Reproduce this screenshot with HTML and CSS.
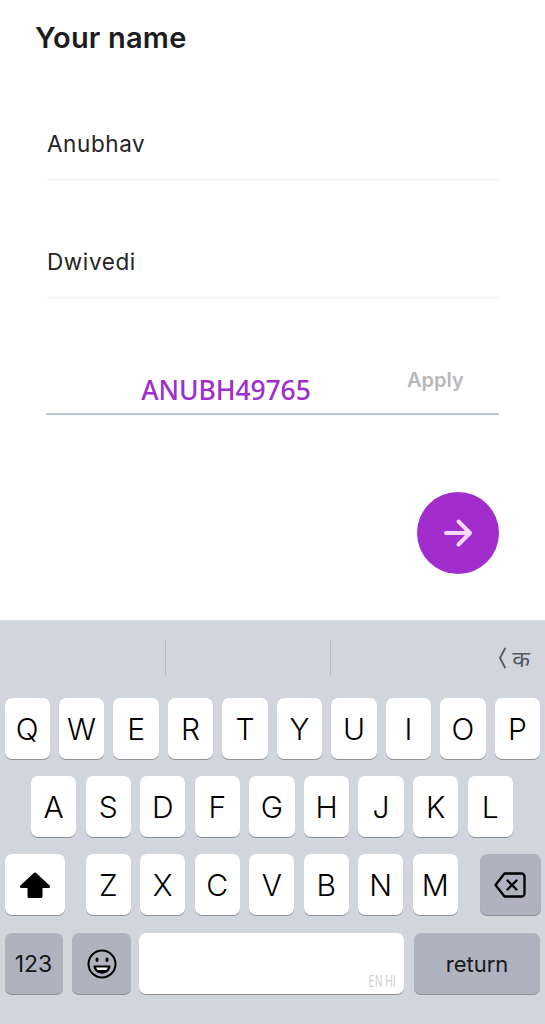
FILE: index.html
```html
<!DOCTYPE html>
<html lang="en">
<head>
<meta charset="utf-8">
<title>Your name</title>
<link rel="stylesheet" href="styles.css">
</head>
<body>
<main class="form">
  <h1 class="title">Your name</h1>
  <div class="field"><span class="value">Anubhav</span></div>
  <div class="field"><span class="value">Dwivedi</span></div>
  <div class="field field-code">
    <span class="code">ANUBH49765</span>
    <span class="apply">Apply</span>
  </div>
  <div class="actions">
    <button class="fab" aria-label="Next">
      <svg width="32" height="32" viewBox="0 0 32 32" fill="none" stroke="#f6d8f9" stroke-width="4" stroke-linecap="round" stroke-linejoin="round"><path d="M4 16H28M16.500 4.500 28 16 16.500 27.500"/></svg>
    </button>
  </div>
</main>
<section class="keyboard">
  <div class="suggest">
    <span class="slot"></span>
    <span class="slot slot-mid"></span>
    <span class="slot slot-lang"><svg class="chev" width="7" height="22" viewBox="0 0 7 22" fill="none" stroke="#55585e" stroke-width="1.800" stroke-linecap="round" stroke-linejoin="round"><path d="M6 1.500 1 11l5 9.500"/></svg><span class="deva">क</span></span>
  </div>
  <div class="row row-top">
    <span class="key">Q</span><span class="key">W</span><span class="key">E</span><span class="key">R</span><span class="key">T</span><span class="key">Y</span><span class="key">U</span><span class="key">I</span><span class="key">O</span><span class="key">P</span>
  </div>
  <div class="row row-mid">
    <span class="key">A</span><span class="key">S</span><span class="key">D</span><span class="key">F</span><span class="key">G</span><span class="key">H</span><span class="key">J</span><span class="key">K</span><span class="key">L</span>
  </div>
  <div class="row row-low">
    <span class="key key-wide">
      <svg width="32" height="28" viewBox="0 0 32 28"><path d="M16 1.500a1.600 1.600 0 0 1 1.200.5L30.600 14.600c1 1 .4 2.400-1 2.400H23.500v8.200c0 1-.7 1.800-1.800 1.800H10.300c-1.100 0-1.800-.8-1.800-1.800V17H2.400c-1.400 0-2-1.400-1-2.400L14.800 2a1.600 1.600 0 0 1 1.200-.5z" fill="#000"/></svg>
    </span>
    <div class="letters">
      <span class="key">Z</span><span class="key">X</span><span class="key">C</span><span class="key">V</span><span class="key">B</span><span class="key">N</span><span class="key">M</span>
    </div>
    <span class="key key-wide key-dark key-back">
      <svg width="32" height="26" viewBox="0 0 32 26" fill="none" stroke="#000" stroke-width="2.300" stroke-linejoin="round" stroke-linecap="round"><path d="M10.500 1.500H27.500a3 3 0 0 1 3 3v17a3 3 0 0 1-3 3H10.500L1.500 13z"/><path d="M13.500 8.500l9 9M22.500 8.500l-9 9"/></svg>
    </span>
  </div>
  <div class="row row-bottom">
    <span class="key key-dark key-num">123</span>
    <span class="key key-dark key-emoji">
      <svg width="30" height="30" viewBox="0 0 30 30" fill="none" stroke="#000" stroke-width="2"><circle cx="15" cy="15" r="13.500"/><ellipse cx="10" cy="10.800" rx="1.500" ry="2.200" fill="#000" stroke="none"/><ellipse cx="20" cy="10.800" rx="1.500" ry="2.200" fill="#000" stroke="none"/><path d="M6.500 16.500h17c0 5-3.800 8.200-8.500 8.200s-8.500-3.200-8.500-8.200z" fill="#000" stroke="none"/><path d="M9 18.500h12c-.5 1.300-1 2-1.800 2.500h-8.400c-.8-.5-1.300-1.200-1.800-2.500z" fill="#fff" stroke="none"/></svg>
    </span>
    <span class="key key-space"><span class="langs">EN HI</span></span>
    <span class="key key-dark key-return">return</span>
  </div>
</section>
</body>
</html>
```
FILE: styles.css
```css
* { box-sizing: border-box; }
html, body { margin: 0; padding: 0; }
body {
  width: 545px;
  height: 1024px;
  overflow: hidden;
  background: #fff;
  font-family: Inter, "Liberation Sans", sans-serif;
  display: flex;
  flex-direction: column;
}
.form {
  height: 620px;
  padding: 0 46px;
}
.title {
  margin: 0 0 0 -11px;
  padding-top: 21px;
  height: 62px;
  font-size: 29px;
  line-height: 34px;
  letter-spacing: 0.2px;
  font-weight: 600;
  color: #1d1d1f;
}
.field {
  height: 118px;
  border-bottom: 1px solid #f0f0f1;
  display: flex;
  align-items: flex-end;
  padding-bottom: 20px;
}
.value {
  font-size: 22.500px;
  line-height: 30px;
  letter-spacing: 0.6px;
  padding-left: 1px;
  color: #232326;
}
.field-code {
  height: 117px;
  border-bottom: 2px solid #bcc5c9;
  padding-bottom: 6px;
}
.code {
  width: 360px;
  text-align: center;
  font-family: "Noto Sans", sans-serif;
  font-size: 26.500px;
  font-weight: 550;
  line-height: 34px;
  letter-spacing: -0.1px;
  color: #a02ecb;
}
.apply {
  margin: 0 0 14px 1px;
  font-size: 20px;
  line-height: 26px;
  font-weight: 600;
  color: #b8b8b8;
}
.actions {
  display: flex;
  justify-content: flex-end;
  padding-top: 77px;
}
.fab {
  width: 82px;
  height: 82px;
  border: 0;
  padding: 0;
  border-radius: 50%;
  background: #a12dcd;
  display: flex;
  align-items: center;
  justify-content: center;
}
.keyboard {
  height: 404px;
  background: #d1d5dc;
  padding-bottom: 30px;
  border-top: 1px solid #d8dade;
}
.suggest {
  height: 77px;
  display: flex;
  padding-top: 19px;
}
.slot {
  width: 165px;
  height: 36px;
}
.slot-mid {
  border-left: 1px solid #b6b9bf;
  border-right: 1px solid #b6b9bf;
  width: 166px;
}
.slot-lang {
  flex: 1;
  display: flex;
  justify-content: flex-end;
  align-items: center;
  gap: 6px;
  padding-right: 15px;
}
.deva {
  font-family: "Noto Sans", "DejaVu Sans", sans-serif;
  font-size: 23px;
  line-height: 30px;
  color: #55585e;
}
.row {
  display: flex;
  height: 61px;
  margin-bottom: 17px;
  padding: 0 4.500px;
}
.row-top, .letters { gap: 9.300px; }
.row-mid { gap: 9.400px; padding-left: 31px; }
.row-bottom { margin-bottom: 0; margin-top: 18px; }
.letters { display: flex; margin-left: 20.700px; }
.key {
  width: 45.200px;
  height: 61px;
  flex: none;
  background: #fff;
  border-radius: 7px;
  box-shadow: 0 1px 0 #8e9096;
  display: flex;
  align-items: center;
  justify-content: center;
  font-family: Inter, "Liberation Sans", sans-serif;
  font-size: 30px;
  font-weight: 350;
  color: #000;
}
.key-wide { width: 60.500px; }
.key-back { margin-left: auto; }
.key-dark { background: #aeb3bf; }
.key-num {
  width: 58px;
  font-size: 23px;
  font-weight: 400;
  color: #17181a;
}
.key-emoji {
  width: 59.300px;
  margin-left: 9.700px;
}
.key-space {
  width: 264.700px;
  margin-left: 8px;
  position: relative;
}
.langs {
  position: absolute;
  right: 8px;
  bottom: 5px;
  font-size: 16.500px;
  font-weight: 400;
  line-height: 16px;
  transform: scaleX(0.62);
  transform-origin: right center;
  color: #cfd1d4;
}
.key-return {
  width: 126.300px;
  margin-left: 9.700px;
  font-size: 22px;
  font-weight: 400;
  color: #17181a;
}
```
